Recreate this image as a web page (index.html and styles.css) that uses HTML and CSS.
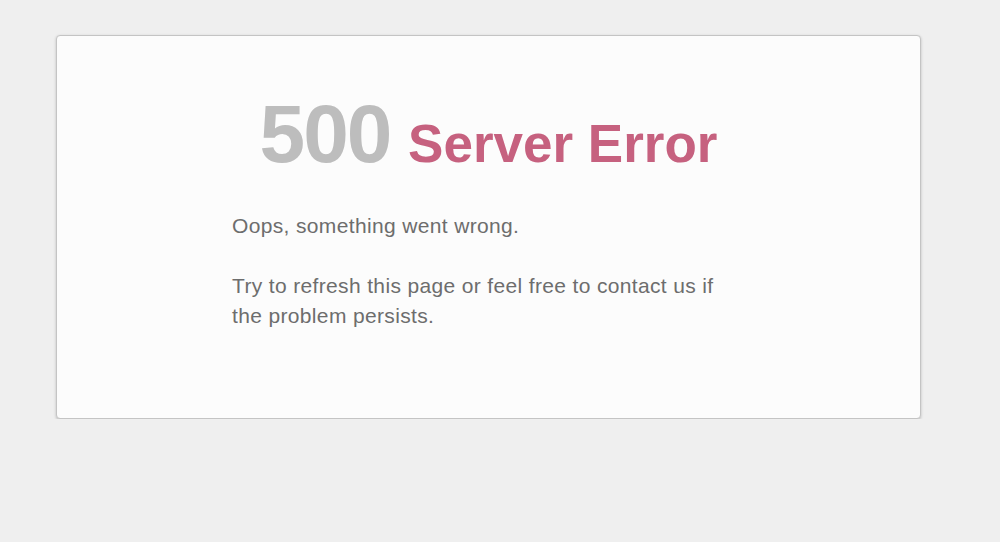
FILE: index.html
```html
<!DOCTYPE html>
<html lang="en">
<head>
<meta charset="utf-8">
<title>500 Server Error</title>
<link rel="stylesheet" href="styles.css">
</head>
<body>
<div class="card">
  <div class="content">
    <h1 class="title"><span class="code">500</span> <span class="label">Server Error</span></h1>
    <p class="msg">Oops, something went wrong.</p>
    <p class="msg">Try to refresh this page or feel free to contact us if the problem persists.</p>
  </div>
</div>
</body>
</html>
```
FILE: styles.css
```css
html, body {
  margin: 0;
  padding: 0;
  background: #efefef;
  font-family: "Liberation Sans", Arial, Helvetica, sans-serif;
}
body {
  padding: 35px 0 0 56px;
}
.card {
  box-sizing: border-box;
  width: 865px;
  height: 384px;
  background: #fcfcfc;
  border: 1px solid #c4c4c4;
  border-radius: 4px;
  box-shadow: 0 1px 3px rgba(0, 0, 0, 0.22);
  padding-top: 56px;
}
.content {
  width: 513px;
  margin: 0 auto;
}
.title {
  margin: 0 0 35px;
  text-align: center;
  font-size: 53px;
  font-weight: bold;
  line-height: 84px;
  height: 84px;
  white-space: nowrap;
}
.code {
  font-size: 82px;
  color: #bdbdbd;
  letter-spacing: -2px;
  margin-right: 3px;
}
.label {
  font-size: 53px;
  color: #c6617f;
}
.msg {
  margin: 0 0 30px;
  font-size: 21px;
  line-height: 30px;
  letter-spacing: 0.35px;
  color: #6d6d6d;
}
```
